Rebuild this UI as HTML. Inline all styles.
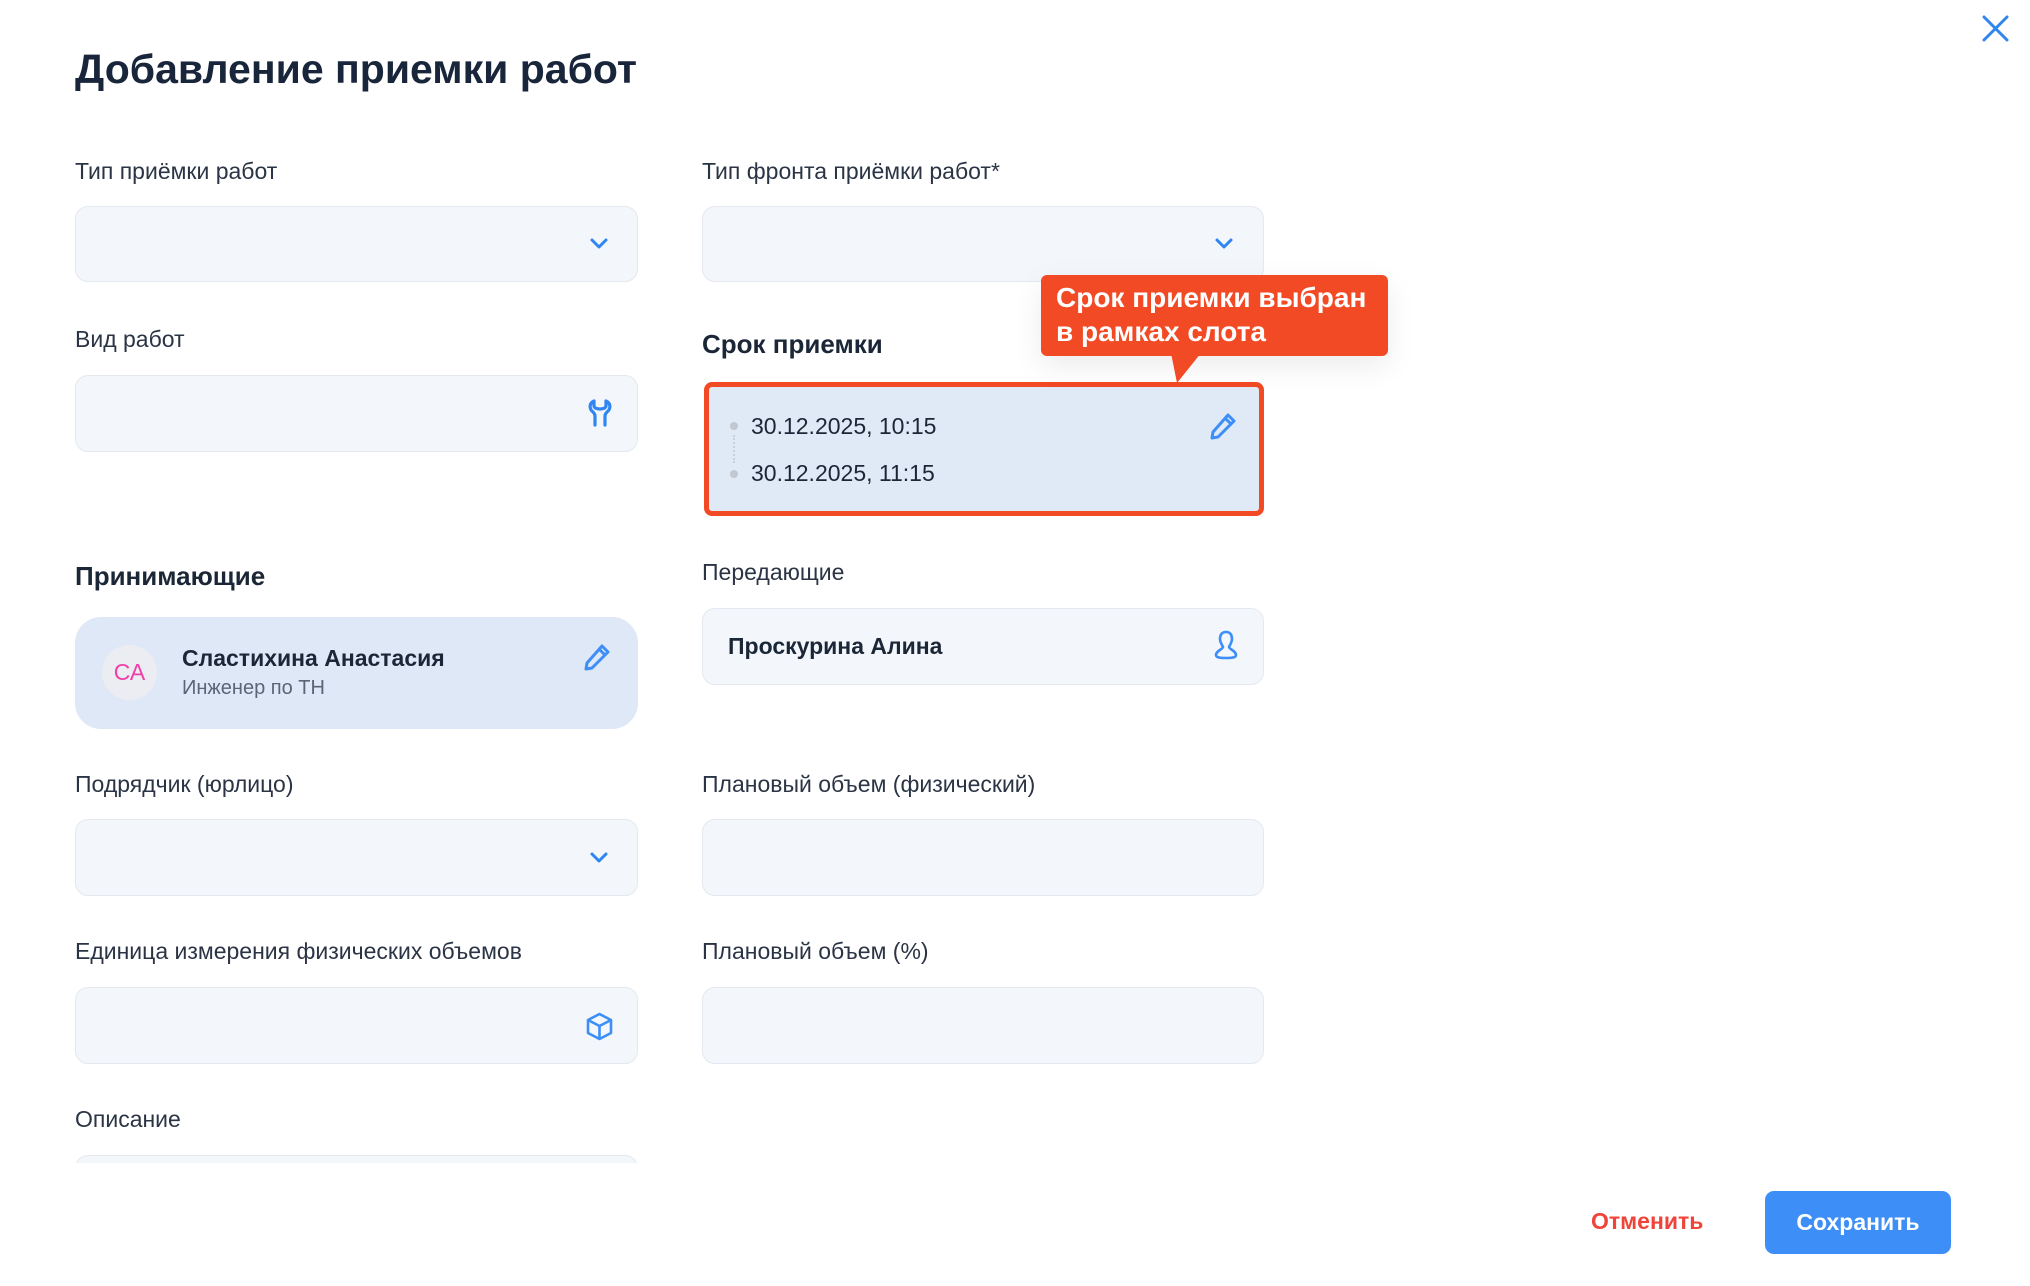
<!DOCTYPE html>
<html><head><meta charset="utf-8"><style>
*{margin:0;padding:0;box-sizing:border-box}
body{width:2030px;height:1286px;background:#fff;position:relative;overflow:hidden;font-family:"Liberation Sans","DejaVu Sans",sans-serif;color:#1b2637}
.t{position:absolute;white-space:nowrap;line-height:30px}
.lbl{font-size:23px;color:#2b3445}
.h{font-size:26px;font-weight:bold;color:#1b2637}
.in{position:absolute;background:#f3f7fb;border:1.5px solid #e4e9ef;border-radius:13px}
svg{position:absolute}
</style></head><body>
<div class="t" style="left:75px;top:46px;line-height:46px;font-size:41px;font-weight:bold;color:#18253a">Добавление приемки работ</div>
<svg style="left:1982px;top:15px" width="27" height="27" viewBox="0 0 27 27"><path d="M2 2L25 25M25 2L2 25" stroke="#2f86f0" stroke-width="3" stroke-linecap="round"/></svg>

<div class="t lbl" style="left:75px;top:156px">Тип приёмки работ</div>
<div class="in" style="left:75px;top:206px;width:563px;height:76px"></div>
<svg style="left:589px;top:237px" width="20" height="14" viewBox="0 0 20 14"><path d="M3 3L10 10L17 3" fill="none" stroke="#2f86f0" stroke-width="3" stroke-linecap="round" stroke-linejoin="round"/></svg>

<div class="t lbl" style="left:702px;top:156px">Тип фронта приёмки работ*</div>
<div class="in" style="left:702px;top:206px;width:562px;height:76px"></div>
<svg style="left:1214px;top:237px" width="20" height="14" viewBox="0 0 20 14"><path d="M3 3L10 10L17 3" fill="none" stroke="#2f86f0" stroke-width="3" stroke-linecap="round" stroke-linejoin="round"/></svg>

<div class="t lbl" style="left:75px;top:324px">Вид работ</div>
<div class="in" style="left:75px;top:375px;width:563px;height:77px"></div>
<svg style="left:586px;top:398px" width="28" height="30" viewBox="0 0 28 30"><path d="M8 3C3 5 3 11 7 14C8 15 9 16 9 18L9 27M20 3C25 5 25 11 21 14C20 15 19 16 19 18L19 27M8 3L8 8C8 10 11 11 14 11C17 11 20 10 20 8L20 3" fill="none" stroke="#2f86f0" stroke-width="3.2" stroke-linecap="round" stroke-linejoin="round"/></svg>

<div class="t h" style="left:702px;top:329px">Срок приемки</div>
<div style="position:absolute;left:704px;top:382px;width:560px;height:134px;background:#e0e9f6;border:5px solid #f24a24;border-radius:8px"></div>
<div style="position:absolute;left:730px;top:422px;width:8px;height:8px;border-radius:50%;background:#c2c8d0"></div>
<div style="position:absolute;left:733px;top:435px;width:2px;height:28px;border-left:2px dotted #c8ced6"></div>
<div style="position:absolute;left:730px;top:470px;width:8px;height:8px;border-radius:50%;background:#c2c8d0"></div>
<div class="t" style="left:751px;top:411px;font-size:23px;color:#1b2637">30.12.2025, 10:15</div>
<div class="t" style="left:751px;top:458px;font-size:23px;color:#1b2637">30.12.2025, 11:15</div>
<svg style="left:1208px;top:411px" width="30" height="30" viewBox="0 0 30 30"><path d="M20 4L26 10L10 26L4 27L5 21Z M17 7L23 13" fill="none" stroke="#3d8ef7" stroke-width="3" stroke-linejoin="round"/></svg>

<div style="position:absolute;left:1041px;top:275px;width:347px;height:81px;background:#f24a24;border-radius:6px;box-shadow:0 10px 30px rgba(0,0,0,0.08)"></div>
<svg style="left:1165px;top:353px" width="42" height="32" viewBox="0 0 42 32"><path d="M6 0L36 0L12 30Z" fill="#f24a24"/></svg>
<div class="t" style="left:1056px;top:281px;font-size:28px;line-height:34px;font-weight:bold;color:#fff">Срок приемки выбран<br>в рамках слота</div>

<div class="t h" style="left:75px;top:561px">Принимающие</div>
<div style="position:absolute;left:75px;top:617px;width:563px;height:112px;background:#dfe8f6;border-radius:26px"></div>
<div style="position:absolute;left:102px;top:645px;width:55px;height:55px;border-radius:50%;background:#ecedf2;color:#f03fa8;font-size:23px;line-height:55px;text-align:center">СА</div>
<div class="t" style="left:182px;top:643px;font-size:23px;font-weight:bold;color:#1b2637">Сластихина Анастасия</div>
<div class="t" style="left:182px;top:673px;font-size:20px;color:#5b6577">Инженер по ТН</div>
<svg style="left:582px;top:642px" width="30" height="30" viewBox="0 0 30 30"><path d="M20 4L26 10L10 26L4 27L5 21Z M17 7L23 13" fill="none" stroke="#3d8ef7" stroke-width="3" stroke-linejoin="round"/></svg>

<div class="t lbl" style="left:702px;top:557px">Передающие</div>
<div class="in" style="left:702px;top:608px;width:562px;height:77px"></div>
<div class="t" style="left:728px;top:631px;font-size:23px;font-weight:bold;color:#1b2637">Проскурина Алина</div>
<svg style="left:1212px;top:629px" width="28" height="32" viewBox="0 0 28 32"><path d="M14 3C9 3 8 7 8 10C8 13 10 16 11 18C11 20 4 22 4 26C4 28 6 29 14 29C22 29 24 28 24 26C24 22 17 20 17 18C18 16 20 13 20 10C20 7 19 3 14 3Z" fill="none" stroke="#3d8ef7" stroke-width="2.6" stroke-linejoin="round"/></svg>

<div class="t lbl" style="left:75px;top:769px">Подрядчик (юрлицо)</div>
<div class="in" style="left:75px;top:819px;width:563px;height:77px"></div>
<svg style="left:589px;top:851px" width="20" height="14" viewBox="0 0 20 14"><path d="M3 3L10 10L17 3" fill="none" stroke="#2f86f0" stroke-width="3" stroke-linecap="round" stroke-linejoin="round"/></svg>

<div class="t lbl" style="left:702px;top:769px">Плановый объем (физический)</div>
<div class="in" style="left:702px;top:819px;width:562px;height:77px"></div>

<div class="t lbl" style="left:75px;top:936px">Единица измерения физических объемов</div>
<div class="in" style="left:75px;top:987px;width:563px;height:77px"></div>
<svg style="left:585px;top:1011px" width="29" height="31" viewBox="0 0 29 31"><path d="M14.5 3L26 9L26 22L14.5 28L3 22L3 9Z M3 9L14.5 15L26 9 M14.5 15L14.5 28" fill="none" stroke="#3d8ef7" stroke-width="2.6" stroke-linejoin="round"/></svg>

<div class="t lbl" style="left:702px;top:936px">Плановый объем (%)</div>
<div class="in" style="left:702px;top:987px;width:562px;height:77px"></div>

<div class="t lbl" style="left:75px;top:1104px">Описание</div>
<div style="position:absolute;left:75px;top:1155px;width:563px;height:8px;overflow:hidden"><div class="in" style="left:0;top:0;width:563px;height:60px"></div></div>

<div class="t" style="left:1591px;top:1206px;font-size:23px;font-weight:bold;color:#f0443a">Отменить</div>
<div style="position:absolute;left:1765px;top:1191px;width:186px;height:63px;background:#3d8ef7;border-radius:9px;color:#fff;font-size:23px;font-weight:bold;line-height:63px;text-align:center">Сохранить</div>
</body></html>
